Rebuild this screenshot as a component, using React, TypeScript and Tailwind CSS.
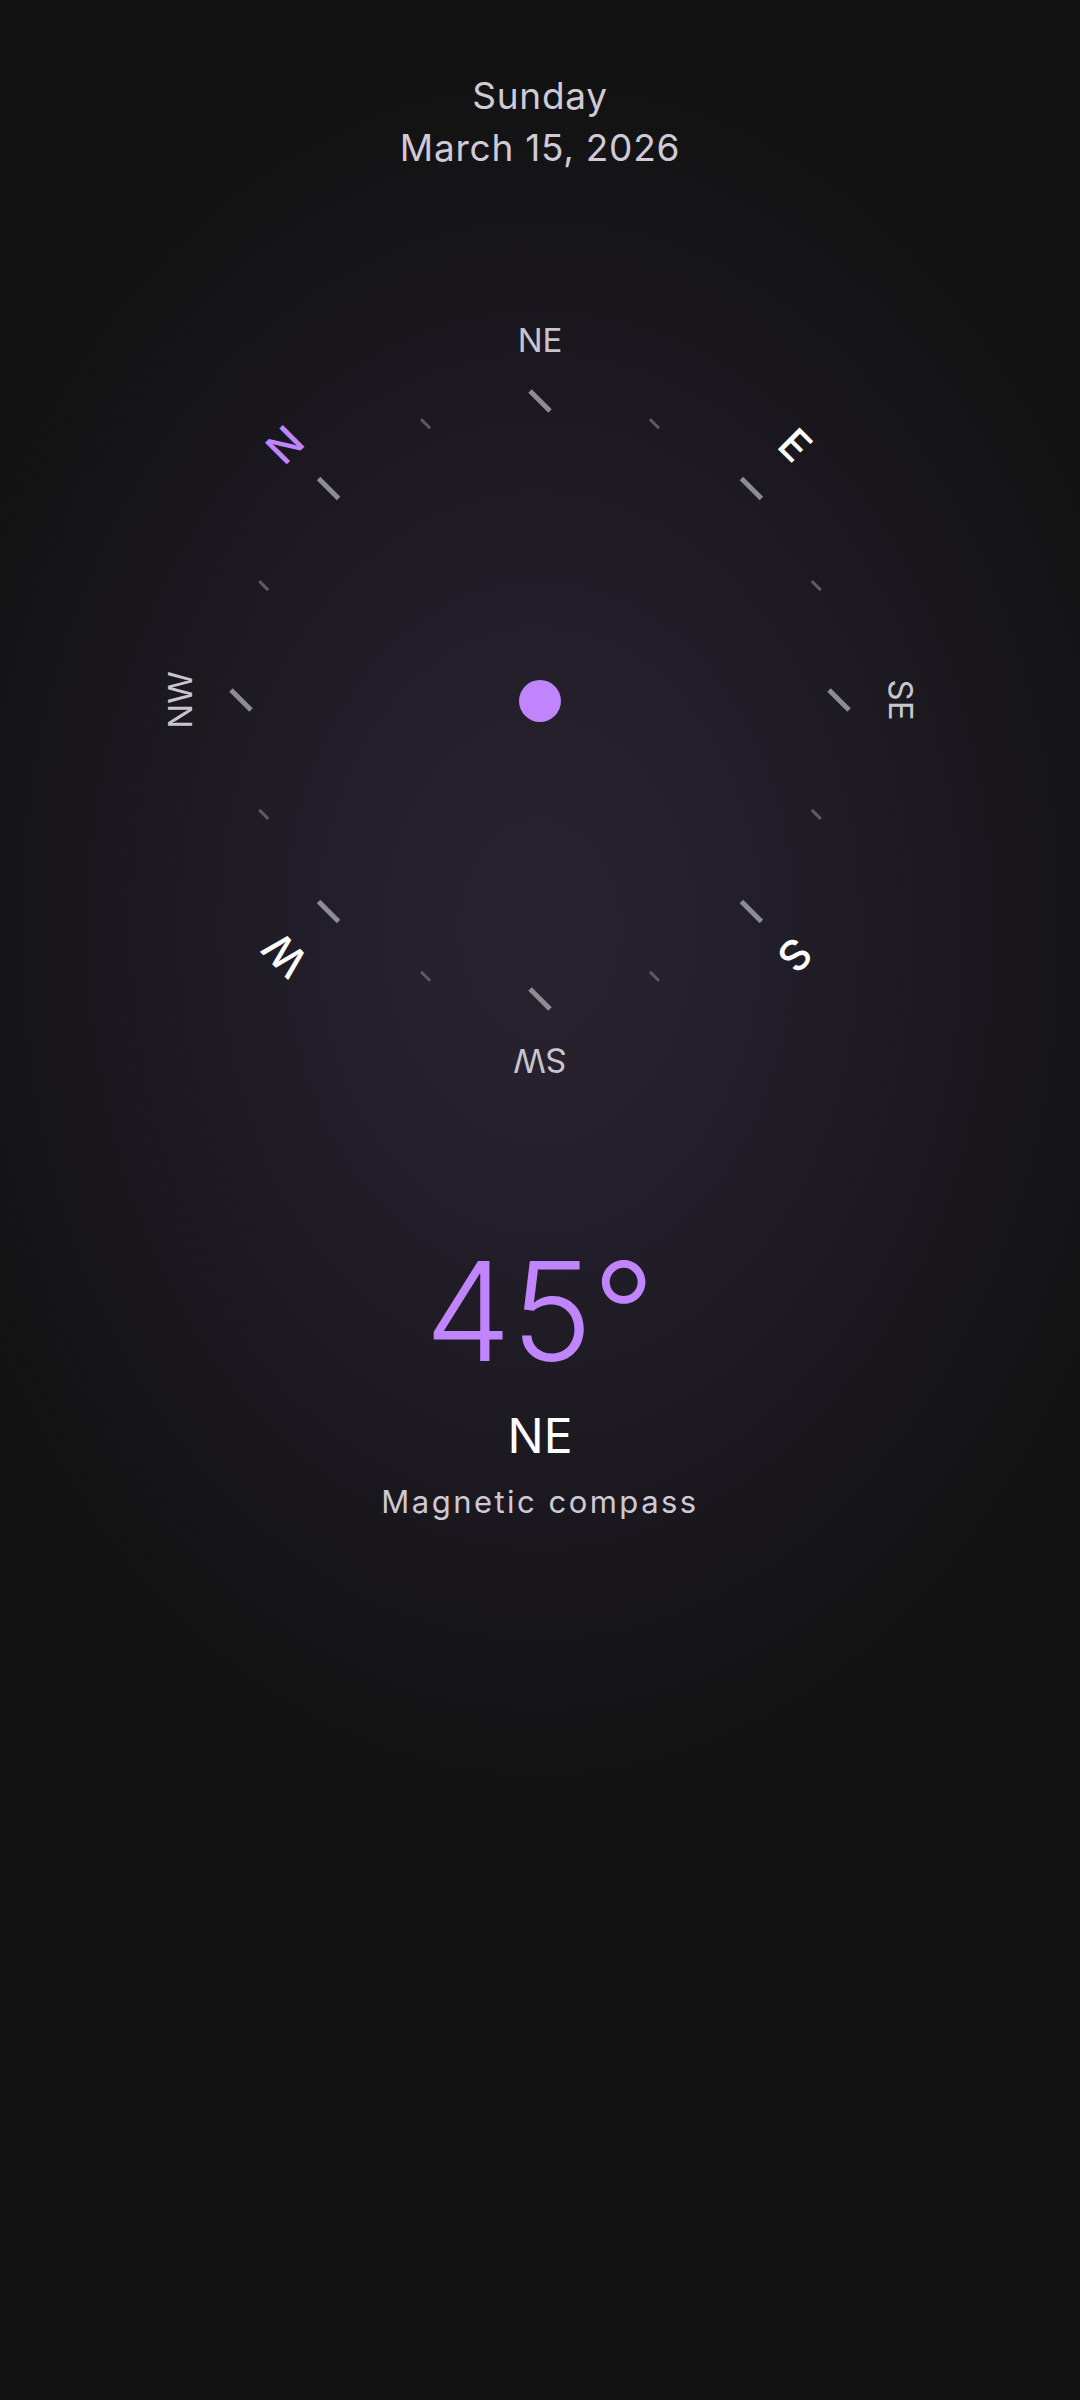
import React from "react";

const LABELS = [
  { text: "N", angle: 0, kind: "north" },
  { text: "NE", angle: 45, kind: "minor" },
  { text: "E", angle: 90, kind: "major" },
  { text: "SE", angle: 135, kind: "minor" },
  { text: "S", angle: 180, kind: "major" },
  { text: "SW", angle: 225, kind: "minor" },
  { text: "W", angle: 270, kind: "major" },
  { text: "NW", angle: 315, kind: "minor" },
];

const HEADING = 45;
const SIZE = 800;
const C = SIZE / 2;

function polar(r: number, deg: number) {
  const a = (deg * Math.PI) / 180;
  return { x: C + r * Math.sin(a), y: C - r * Math.cos(a) };
}

function Dial() {
  const ticks = Array.from({ length: 16 }, (_, i) => i * 22.5);

  return (
    <div className="relative w-[800px] h-[800px]">
      <svg
        width={SIZE}
        height={SIZE}
        viewBox={`0 0 ${SIZE} ${SIZE}`}
        className="absolute inset-0"
      >
        {ticks.map((deg, i) => {
          const major = i % 2 === 0;
          const p = polar(299, deg);
          const d = major ? 10 : 4.5;
          return (
            <line
              key={deg}
              x1={p.x - d}
              y1={p.y - d}
              x2={p.x + d}
              y2={p.y + d}
              stroke={major ? "#8d8b93" : "#5c5a63"}
              strokeWidth={major ? 5 : 3}
            />
          );
        })}
        <circle cx={C} cy={C + 1} r={21} fill="#c084fc" />
      </svg>

      {LABELS.map((l) => {
        const a = l.angle - HEADING;
        const p = polar(360, a);
        const cls =
          l.kind === "north"
            ? "text-[42px] font-medium text-[#c084fc]"
            : l.kind === "major"
            ? "text-[42px] font-medium text-white"
            : "text-[33px] font-normal text-[#c9c4d0]";
        return (
          <span
            key={l.text}
            className={`absolute leading-none whitespace-nowrap ${cls}`}
            style={{
              left: p.x,
              top: p.y,
              transform: `translate(-50%, -50%) rotate(${a}deg)`,
            }}
          >
            {l.text}
          </span>
        );
      })}
    </div>
  );
}

export default function App() {
  return (
    <div
      className="
        w-full
        min-h-screen
        flex
        flex-col
        items-center
        bg-[#121212]
        bg-[radial-gradient(ellipse_660px_900px_at_50%_930px,#29232f_0%,#221e29_35%,#1a181e_65%,#121212_95%)]
        font-['Inter',sans-serif]
      "
    >
      {/* Date */}

      <div className="pt-[70px] flex flex-col items-center text-[37px] leading-[52px] tracking-[0.02em] text-[#d0cad6]">
        <p>Sunday</p>
        <p>March 15, 2026</p>
      </div>

      {/* Compass */}

      <div className="mt-[126px]">
        <Dial />
      </div>

      {/* Reading */}

      <div className="mt-[143px] flex flex-col items-center">
        <p className="text-[137px] leading-none font-[350] text-[#c084fc]">
          45°
        </p>
        <p className="mt-[32px] text-[48px] leading-none text-white">NE</p>
        <p className="mt-[26px] text-[31px] leading-none tracking-[0.08em] text-[#cfc8d6]">
          Magnetic compass
        </p>
      </div>
    </div>
  );
}
